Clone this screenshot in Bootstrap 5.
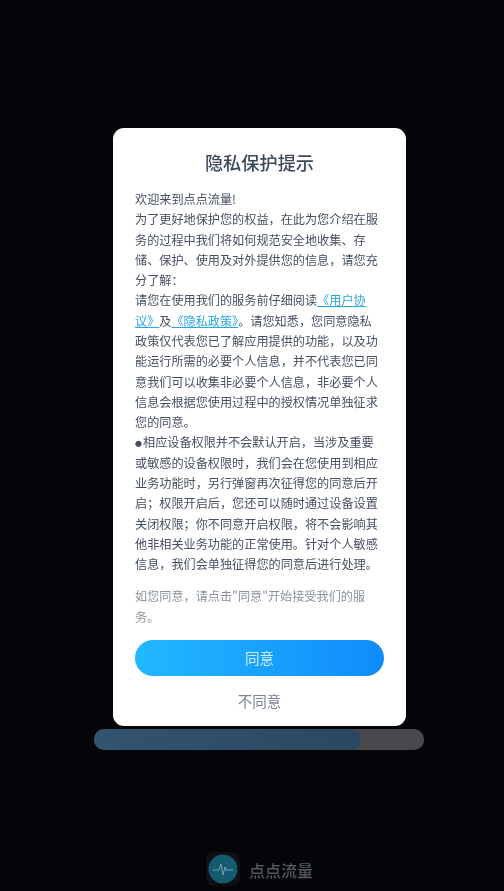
<!DOCTYPE html>
<html lang="zh">
<head>
<meta charset="utf-8">
<title>隐私保护提示</title>
<link href="https://cdn.jsdelivr.net/npm/bootstrap@5.3.0/dist/css/bootstrap.min.css" rel="stylesheet">
<style>
html,body{height:891px;overflow:hidden}
body{background:#030508;font-family:"Noto Sans CJK SC","Liberation Sans",sans-serif;padding-top:128px;width:504px}
.sheet{width:293px;height:598px;margin-left:113px;background:#fff;border-radius:11px;padding:20px 22px 0;filter:blur(.35px)}
.sheet-title{font-size:18.2px;line-height:28px;font-weight:500;color:#3d4a5e;text-align:center;margin:0 0 13px}
.sheet-body{font-size:12.15px;line-height:20.28px;color:#465060;margin:0;width:245px}
.sheet-body a{color:#2aa7e0;text-decoration:underline}
.dot{display:inline-block;width:8px;font-size:7px;line-height:1;vertical-align:1px}
.sheet-note{font-size:12.15px;line-height:20.28px;color:#8a919c;margin:12px 0 0;width:245px}
.agree{display:block;width:249px;height:36px;border:0;border-radius:18px;background:linear-gradient(90deg,#22b8ff,#0f8cfb);color:#cfeeff;font-size:14.5px;line-height:36px;padding:0;margin-top:13px}
.refuse{display:block;width:249px;border:0;background:none;color:#7d8490;font-size:14.5px;line-height:22px;padding:0;margin-top:14px}
.track{width:330px;height:21px;margin:3px 0 0 94px;background:#47494d;border-radius:10px;overflow:hidden;filter:blur(.5px)}
.track-fill{height:100%;background:linear-gradient(90deg,#33546e,#2b4860);border-radius:10px}
.brand{margin:102px 0 0 206px;gap:9px;filter:blur(.5px)}
.brand-name{font-size:16px;line-height:20px;color:#54575b;font-weight:500;margin-top:2px}
</style>
</head>
<body>
<div class="sheet">
<h1 class="sheet-title">隐私保护提示</h1>
<p class="sheet-body">欢迎来到点点流量!<br>为了更好地保护您的权益，在此为您介绍在服务的过程中我们将如何规范安全地收集、存储、保护、使用及对外提供您的信息，请您充分了解：<br>请您在使用我们的服务前仔细阅读<a href="#">《用户协议》</a>及<a href="#">《隐私政策》</a>。请您知悉，您同意隐私政策仅代表您已了解应用提供的功能，以及功能运行所需的必要个人信息，并不代表您已同意我们可以收集非必要个人信息，非必要个人信息会根据您使用过程中的授权情况单独征求您的同意。<br><span class="dot">●</span>相应设备权限并不会默认开启，当涉及重要或敏感的设备权限时，我们会在您使用到相应业务功能时，另行弹窗再次征得您的同意后开启；权限开启后，您还可以随时通过设备设置关闭权限；你不同意开启权限，将不会影响其他非相关业务功能的正常使用。针对个人敏感信息，我们会单独征得您的同意后进行处理。</p>
<p class="sheet-note">如您同意，请点击"同意"开始接受我们的服务。</p>
<button class="agree btn" type="button">同意</button>
<button class="refuse btn" type="button">不同意</button>
</div>
<div class="track"><div class="track-fill" style="width:81%"></div></div>
<div class="brand d-flex align-items-center">
<svg width="34" height="34" viewBox="0 0 34 34"><rect width="34" height="34" rx="8" fill="#0e1114"/><circle cx="17" cy="17" r="14.5" fill="#165a70"/><path d="M7 18h6l2-6 2 11 2-8 1 3h7" fill="none" stroke="#6fa5b3" stroke-width="1"/></svg>
<span class="brand-name">点点流量</span>
</div>
</body>
</html>
